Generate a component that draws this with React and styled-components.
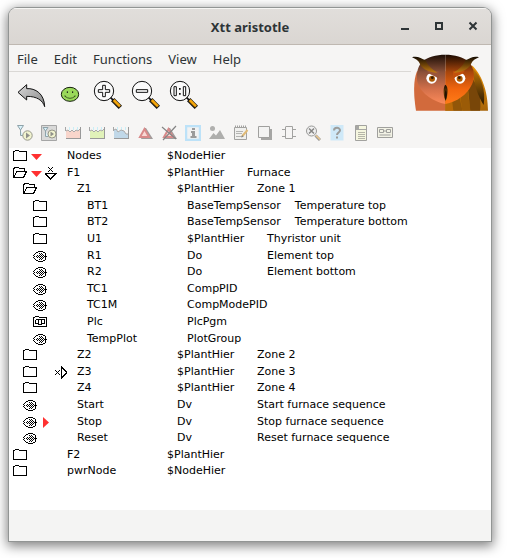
import React from "react";
import styled, { createGlobalStyle } from "styled-components";

const GlobalStyle = createGlobalStyle`
  *, *::before, *::after { box-sizing: border-box; }
  body { margin: 0; background: #fff; }
`;

const Desktop = styled.div`
  display: flex;
  min-height: 100vh;
  padding: 8px 16px 17px 9px;
`;

const Window = styled.main`
  flex: 1;
  min-width: 0;
  display: flex;
  flex-direction: column;
  overflow: hidden;
  border-radius: 8px 8px 0 0;
  background: #f6f5f4;
  box-shadow: 0 0 0 1px #929594, 0 3px 12px 2px rgba(0, 0, 0, 0.5);
  font-family: "Noto Sans", sans-serif;
  font-size: 13px;
  color: #2e3436;
`;

const TitleBar = styled.header`
  display: grid;
  grid-template-columns: 1fr auto 1fr;
  align-items: center;
  height: 37px;
  border-bottom: 1px solid #bfb8b1;
  background: linear-gradient(#e1dedb, #dad6d2);
  box-shadow: inset 0 1px #f6f5f3;
`;

const Title = styled.h1`
  grid-column: 2;
  margin: 0;
  padding-top: 2px;
  font-size: 13px;
  line-height: 20px;
  font-weight: 700;
`;

const WindowButtons = styled.div`
  display: flex;
  justify-content: flex-end;
  padding-right: 1px;
`;

const PlainButton = styled.button`
  display: flex;
  align-items: center;
  justify-content: center;
  padding: 0;
  border: 0;
  background: none;
  color: inherit;
  font: inherit;
`;

const WindowButton = styled(PlainButton)`
  width: 34px;
  height: 34px;
`;

const Head = styled.div`
  display: flex;
  align-items: flex-start;
`;

const Bars = styled.div`
  flex: 1;
  min-width: 0;
`;

const MenuBar = styled.nav`
  display: flex;
  height: 27px;
  padding-top: 2px;
  border-bottom: 1px solid #dad8d5;
`;

const MenuButton = styled(PlainButton)`
  padding: 0 8px;
  line-height: 20px;
`;

const ToolBar = styled.div`
  display: flex;
  align-items: center;
  height: ${(p) => p.$height}px;
  padding-left: 4px;
`;

const ToolButton = styled(PlainButton)`
  flex: none;
  width: ${(p) => p.$width}px;
  height: 30px;
`;

const Owl = styled.svg`
  flex: none;
  width: 76px;
  height: 57px;
  margin: 9px 3px 0 1px;
`;

const Tree = styled.section`
  flex: 1;
  background: #fff;
  color: #000;
  font-family: "DejaVu Sans", sans-serif;
  font-size: 11px;
  line-height: 16px;
`;

const Rows = styled.ul`
  display: grid;
  grid-auto-rows: 1fr;
  min-height: 332px;
  margin: 0;
  padding: 0 0 0 4px;
  list-style: none;
`;

const Row = styled.li`
  display: flex;
  align-items: flex-start;
  padding-left: ${(p) => p.$level * 10}px;
  white-space: nowrap;
`;

const Marks = styled.span`
  display: grid;
  grid-template-columns: 18px 14px 22px;
  align-items: center;
  height: 16px;

  svg {
    display: block;
  }
`;

const NodeName = styled.span`
  width: 100px;
`;

const NodeClass = styled.span`
  min-width: 80px;
  padding-right: 14px;
`;

const StatusBar = styled.footer`
  height: 31px;
  background: #f4f4f3;
`;

/* ---------- large tool icons ---------- */

const Big = ({ children }) => (
  <svg width="30" height="30" viewBox="0 0 90 90" aria-hidden="true">
    {children}
  </svg>
);

const BackIcon = () => (
  <Big>
    <defs>
      <linearGradient id="back" x1="0" y1="0" x2="1" y2="1">
        <stop offset="0" stopColor="#d8d8d8" />
        <stop offset="1" stopColor="#858585" />
      </linearGradient>
    </defs>
    <path
      d="M3 37 29 14V26C55 24 82 41 83 80 77 61 60 49 29 49V60Z"
      fill="url(#back)"
      stroke="#111"
      strokeWidth="3"
    />
  </Big>
);

const SmileIcon = () => (
  <Big>
    <ellipse cx="45" cy="43" rx="26" ry="21" fill="#9ad95a" stroke="#15200c" strokeWidth="3" />
    <path d="M37 34v5M53 34v5" stroke="#111" strokeWidth="3" />
    <path d="M30 49Q45 61 60 49M28 48h4M58 48h4" fill="none" stroke="#15200c" strokeWidth="2" />
  </Big>
);

const Magnifier = ({ children }) => (
  <Big>
    <circle cx="33" cy="33" r="29" fill="#fafafa" stroke="#111" strokeWidth="3" />
    {children}
    <path d="M53 53 62 62" stroke="#111" strokeWidth="5" />
    <path d="M59 59 82 82" stroke="#111" strokeWidth="14" />
    <path d="M62 60 81 79" stroke="#f5a70c" strokeWidth="8" />
    <path d="M60 64 78 82" stroke="#b87700" strokeWidth="2" />
  </Big>
);

const ZoomInIcon = () => (
  <Magnifier>
    <path
      d="M29 16h8v13h13v8H37v13h-8V37H16v-8h13Z"
      fill="#fff"
      stroke="#111"
      strokeWidth="3"
    />
  </Magnifier>
);

const ZoomOutIcon = () => (
  <Magnifier>
    <path d="M16 29h34v8H16Z" fill="#fff" stroke="#111" strokeWidth="3" />
  </Magnifier>
);

const ZoomResetIcon = () => (
  <Magnifier>
    <path
      d="M15 20h7v27h-7ZM43 20h7v27h-7Z"
      fill="#fff"
      stroke="#111"
      strokeWidth="3"
    />
    <path d="M30 24h5v5h-5ZM30 39h5v5h-5Z" fill="#111" />
  </Magnifier>
);

/* ---------- small tool icons ---------- */

const Small = ({ children }) => (
  <svg width="16" height="16" viewBox="0 0 16 16" fill="none" aria-hidden="true">
    {children}
  </svg>
);

const Filter = ({ boxed }) => (
  <Small>
    {boxed && <path d="M.5.5h15v15H.5Z" fill="#d9d9d8" stroke="#a5a5a5" />}
    <path
      d={boxed ? "M2 2.5h5L4.5 6ZM4.5 6v5.5H7" : "M.5.5h6L3.5 5ZM3.5 5v5.5H6"}
      fill="#d9f2fa"
      stroke="#8fa3aa"
    />
    <circle
      cx={boxed ? 11 : 10.5}
      cy={boxed ? 9 : 10.5}
      r={boxed ? 4 : 4.7}
      fill="#f1f3cf"
      stroke="#96978a"
    />
    <path d={boxed ? "M9.5 6.5 13 9l-3.5 2.5Z" : "M9 7.5 13 10.500 9 13.500Z"} fill="#8f908a" />
  </Small>
);

const Trend = ({ fill, smooth }) => {
  const line = smooth
    ? "M1 5 3 4 5 7 8 5 11 6 13 9 15 9"
    : "M1 6 3 5 5 7 7 5 9 7 11 5 13 6 15 4";
  return (
    <Small>
      <path d="M4.500 2v3M8.500 2v3M12.500 2v3" stroke="#c9eef7" />
      <path d={line + "V13H1Z"} fill={fill} />
      <path d={line} stroke="#a9a9a9" />
      <path d="M.5 2v4" stroke="#a5a5a5" />
      <path d="M1 13.500h15M15.500 2v12" stroke="#999" />
    </Small>
  );
};

const AlarmIcon = ({ crossed }) => (
  <Small>
    <path d="M8 3h1l7 11H4Z" fill="#a09c9b" />
    <path d="M7.500 4 12 12H3Z" fill="#f8d9d5" stroke="#d98a8a" strokeWidth="2" />
    {crossed && <path d="M1 2 15 14M15 1 2 15" stroke="#858585" strokeWidth="1.2" />}
  </Small>
);

const InfoIcon = () => (
  <Small>
    <path d="M1 1h14v14H1Z" fill="#f2f2f2" stroke="#bde2f8" strokeWidth="2.5" />
    <path d="M7 3h3v2H7ZM6 6h4v5h1.500v2h-6v-2H7V8H6Z" fill="#9b9b9b" />
  </Small>
);

const PictureIcon = () => (
  <Small>
    <circle cx="3.500" cy="3.500" r="2.500" fill="#b0b0ae" />
    <path d="M0 14 4.500 8 7 10.500 11 5l5 9Z" fill="#aeaeac" />
  </Small>
);

const NotesIcon = () => (
  <Small>
    <path d="M1.500 2.500h12v12h-12Z" fill="#f0f0ee" stroke="#a2a2a0" />
    <path d="M2 1.500h12" stroke="#a2a2a0" strokeWidth="2" strokeDasharray="1 1" />
    <path d="M3 6.500h7M3 8.500h6M3 11.500h7" stroke="#b4b4b2" />
    <path d="M14.500 5 9 11.500" stroke="#e0ba76" strokeWidth="2" />
    <path d="M9.500 10 8 12.500l2.500-.8" fill="#878787" />
  </Small>
);

const WindowIcon = () => (
  <Small>
    <path d="M4 4h11v11H4Z" fill="#a6a6a4" />
    <path d="M1.500 1.500h11v11h-11Z" fill="#f3f3f2" stroke="#a0a09e" />
  </Small>
);

const BlockIcon = () => (
  <Small>
    <path d="M4.500 2v11.500h7V1.500h-7M1 4.500h3M12 4.500h3M12 11.500h3M1 11.500h3" stroke="#a2a2a0" />
  </Small>
);

const SearchCrossIcon = () => (
  <Small>
    <circle cx="6.500" cy="6" r="5" fill="#f1f1f1" stroke="#989896" />
    <path d="M4 3.500l5 5M9 3.500l-5 5" stroke="#858583" strokeWidth="1.5" />
    <path d="M10.500 10.500 15 15" stroke="#9b9b99" strokeWidth="3" />
    <path d="M11 10.500 15 14.500" stroke="#edc98c" strokeWidth="1.5" />
  </Small>
);

const HelpIcon = () => (
  <Small>
    <path d="M1.500 0h13v15.500h-13Z" fill="#cfe9f8" />
    <path
      d="M5 5.500C5 2 11 2 11 5.300 11 7.500 8 7.500 8 10M8 11.500v2"
      stroke="#9d9d9b"
      strokeWidth="2"
    />
  </Small>
);

const ListIcon = () => (
  <Small>
    <path d="M2.500.5h11v15h-11Z" fill="#f5f6df" stroke="#a2a29f" />
    <path d="M3 1h3v3h7v1H3Z" fill="#a7a7a4" />
    <path d="M5 7.500h7M5 9.500h7M5 11.500h7M5 13.500h7" stroke="#b5b5a8" />
  </Small>
);

const PanelIcon = () => (
  <Small>
    <path d="M.5 2.500h15v10H.5Z" fill="#f2f2e5" stroke="#a0a09d" />
    <path d="M2.500 4.500h4v3h-4ZM9.500 4.500h4v3h-4ZM6.500 6h3M2.500 10h11" stroke="#a0a09d" />
  </Small>
);

/* ---------- tree marks ---------- */

const Glyph = ({ width = 14, children }) => (
  <svg
    width={width}
    height="14"
    viewBox={`0 0 ${width} 14`}
    fill="none"
    stroke="#000"
    shapeRendering="crispEdges"
    aria-hidden="true"
  >
    {children}
  </svg>
);

const folderPath = "M.5 11.500V2.500H1.500L2.500 1.500H5.500L6.500 2.500H13.500V11.500Z";

const nodeIcons = {
  folder: (
    <Glyph>
      <path d={folderPath} />
    </Glyph>
  ),
  open: (
    <Glyph>
      <path d="M.5 11.500V2.500L2.500 1.500H5.500L6.500 2.500H11.500V5M.5 11.500 4 5.500H13.500L10.500 11.500Z" />
    </Glyph>
  ),
  program: (
    <Glyph>
      <path d={folderPath} />
      <path d="M3 4.500h9M5.500 4.500v5h3v-5M2.500 5v3M2 8.500h3M9 8.500h3M11.500 4v5" />
    </Glyph>
  ),
  object: (
    <Glyph>
      <path
        d="M5 2.500h5M3 3.500h2M10 3.500h2M2 4.500h1M6 4.500h1M8 4.500h1M12 4.500h1M1 5.500h1M7 5.500h1M9 5.500h1M12 5.500h1M0 6.500h1M4 6.500h1M6 6.500h1M8 6.500h1M10 6.500h1M12 6.500h1M1 7.500h1M3 7.500h1M5 7.500h1M7 7.500h1M9 7.500h1M11 7.500h3M0 8.500h1M4 8.500h1M6 8.500h1M8 8.500h1M10 8.500h1M12 8.500h1M1 9.500h1M7 9.500h1M9 9.500h1M12 9.500h1M2 10.500h1M6 10.500h1M8 10.500h1M12 10.500h1M3 11.500h2M10 11.500h2M5 12.500h5"
      />
    </Glyph>
  ),
};

const DownMark = () => (
  <svg width="11" height="14" viewBox="0 0 11 14" aria-hidden="true">
    <path d="M0 5h11L5.500 11Z" fill="#ff3030" />
  </svg>
);

const RightMark = () => (
  <svg width="11" height="14" viewBox="0 0 11 14" aria-hidden="true">
    <path d="M2 2v11l6-5.500Z" fill="#ff3030" />
  </svg>
);

const CrossDownMark = () => (
  <Glyph width={12}>
    <path d="M3 1l5 5M8 1l-5 5M0 7.500h11L5.500 13Z" />
  </Glyph>
);

const CrossRightMark = () => (
  <Glyph width={12}>
    <path d="M0 5l5 5M5 5l-5 5M6.500 2v11L12 7.500Z" />
  </Glyph>
);

/* ---------- data ---------- */

const menus = ["File", "Edit", "Functions", "View", "Help"];

const mainTools = [
  ["Back", <BackIcon />],
  ["Acknowledge", <SmileIcon />],
  ["Zoom in", <ZoomInIcon />],
  ["Zoom out", <ZoomOutIcon />],
  ["Zoom reset", <ZoomResetIcon />],
];

const objectTools = [
  ["Open object graph", <Filter />],
  ["Open program", <Filter boxed />],
  ["Trend", <Trend fill="#f8d5cb" />],
  ["Fast trend", <Trend fill="#e1f2b9" />],
  ["History", <Trend fill="#c1d8e8" smooth />],
  ["Alarms", <AlarmIcon />],
  ["Block alarms", <AlarmIcon crossed />],
  ["Information", <InfoIcon />],
  ["Picture", <PictureIcon />],
  ["Notes", <NotesIcon />],
  ["Window", <WindowIcon />],
  ["Block", <BlockIcon />],
  ["Cross references", <SearchCrossIcon />],
  ["Class help", <HelpIcon />],
  ["Data sheet", <ListIcon />],
  ["Simulate", <PanelIcon />],
];

const nodes = [
  { level: 0, icon: "folder", name: "Nodes", type: "$NodeHier", alarm: <DownMark /> },
  {
    level: 0,
    icon: "open",
    name: "F1",
    type: "$PlantHier",
    text: "Furnace",
    alarm: <DownMark />,
    block: <CrossDownMark />,
  },
  { level: 1, icon: "open", name: "Z1", type: "$PlantHier", text: "Zone 1" },
  { level: 2, icon: "folder", name: "BT1", type: "BaseTempSensor", text: "Temperature top" },
  { level: 2, icon: "folder", name: "BT2", type: "BaseTempSensor", text: "Temperature bottom" },
  { level: 2, icon: "folder", name: "U1", type: "$PlantHier", text: "Thyristor unit" },
  { level: 2, icon: "object", name: "R1", type: "Do", text: "Element top" },
  { level: 2, icon: "object", name: "R2", type: "Do", text: "Element bottom" },
  { level: 2, icon: "object", name: "TC1", type: "CompPID" },
  { level: 2, icon: "object", name: "TC1M", type: "CompModePID" },
  { level: 2, icon: "program", name: "Plc", type: "PlcPgm" },
  { level: 2, icon: "object", name: "TempPlot", type: "PlotGroup" },
  { level: 1, icon: "folder", name: "Z2", type: "$PlantHier", text: "Zone 2" },
  {
    level: 1,
    icon: "folder",
    name: "Z3",
    type: "$PlantHier",
    text: "Zone 3",
    block: <CrossRightMark />,
  },
  { level: 1, icon: "folder", name: "Z4", type: "$PlantHier", text: "Zone 4" },
  { level: 1, icon: "object", name: "Start", type: "Dv", text: "Start furnace sequence" },
  {
    level: 1,
    icon: "object",
    name: "Stop",
    type: "Dv",
    text: "Stop furnace sequence",
    alarm: <RightMark />,
  },
  { level: 1, icon: "object", name: "Reset", type: "Dv", text: "Reset furnace sequence" },
  { level: 0, icon: "folder", name: "F2", type: "$PlantHier" },
  { level: 0, icon: "folder", name: "pwrNode", type: "$NodeHier" },
];

const Logo = () => (
  <Owl viewBox="36 28 228 171" aria-label="Owl" role="img">
    <defs>
      <linearGradient id="faceL" x1="0" y1="0" x2="0" y2="1">
        <stop offset="0" stopColor="#1c0d05" />
        <stop offset=".35" stopColor="#8a5038" />
        <stop offset=".7" stopColor="#d3704a" />
        <stop offset="1" stopColor="#fb8a5a" />
      </linearGradient>
      <linearGradient id="faceR" x1="0" y1="0" x2="0" y2="1">
        <stop offset="0" stopColor="#1c0a00" />
        <stop offset=".35" stopColor="#a8460c" />
        <stop offset=".7" stopColor="#f2660e" />
        <stop offset="1" stopColor="#ff7b18" />
      </linearGradient>
      <linearGradient id="tuft" x1="0" y1="0" x2="0" y2="1">
        <stop offset="0" stopColor="#160d02" />
        <stop offset=".5" stopColor="#6b4007" />
        <stop offset="1" stopColor="#c47c12" />
      </linearGradient>
      <linearGradient id="wing" x1="0" y1="0" x2="0" y2="1">
        <stop offset="0" stopColor="#e89108" />
        <stop offset="1" stopColor="#a86508" />
      </linearGradient>
      <linearGradient id="feather" x1="0" y1="0" x2="0" y2="1">
        <stop offset="0" stopColor="#c07708" />
        <stop offset="1" stopColor="#281701" />
      </linearGradient>
    </defs>
    <path d="M51 80C40 105 40 150 48 198H137V80Z" fill="#d26a3c" />
    <path d="M215 62C244 86 264 140 264 198H136V150L210 100Z" fill="url(#wing)" />
    <path d="M136 165 155 163 160 198H136Z" fill="#b96a08" />
    <path d="M156 162 178 152 187 198H160Z" fill="#925608" />
    <path d="M180 150 203 135 211 198H187Z" fill="#9b5b07" />
    <path d="M204 132 219 103C236 130 245 160 240 198H211Z" fill="#784609" />
    <path d="M219 72C246 98 257 137 251 181 235 157 220 116 219 72Z" fill="url(#feather)" />
    <path
      d="M136 30C108 30 82 37 66 51 49 69 48 100 54 117 64 147 101 171 136 178Z"
      fill="url(#faceL)"
    />
    <path
      d="M136 30C164 30 190 37 206 51 224 70 226 99 216 119 202 151 169 172 136 178Z"
      fill="url(#faceR)"
    />
    <circle cx="95" cy="101" r="16" fill="#fff" />
    <circle cx="180" cy="101" r="16" fill="#fff" />
    <circle cx="96" cy="102" r="9" fill="#a95905" />
    <circle cx="179" cy="102" r="9" fill="#a95905" />
    <circle cx="97" cy="99" r="4" fill="#301800" />
    <circle cx="178" cy="99" r="4" fill="#301800" />
    <path d="M80 78 88 87 116 101V80Z" fill="#99553a" />
    <path d="M195 78 187 87 159 101V80Z" fill="#c2500c" />
    <path
      d="M36 38C52 33 64 42 77 47 82 62 96 74 112 84 88 83 67 74 60 58 55 47 47 43 36 38Z"
      fill="url(#tuft)"
    />
    <path
      d="M237 38C221 33 209 42 196 47 191 62 177 74 161 84 185 83 206 74 213 58 218 47 226 43 237 38Z"
      fill="url(#tuft)"
    />
    <path d="M136 120C146 125 144 154 137 170 129 154 129 126 136 120Z" fill="url(#tuft)" />
    <path d="M137 136C143 144 141 158 137 168 132 157 132 147 137 136Z" fill="#211002" />
  </Owl>
);

export default function App() {
  return (
    <>
      <GlobalStyle />
      <Desktop>
        <Window>
          <TitleBar>
            <Title>Xtt aristotle</Title>
            <WindowButtons>
              <WindowButton aria-label="Minimize">
                <svg width="10" height="10" aria-hidden="true">
                  <path d="M1 7h8v2H1Z" fill="#2e3436" />
                </svg>
              </WindowButton>
              <WindowButton aria-label="Maximize">
                <svg width="10" height="10" aria-hidden="true">
                  <path d="M2 2h6v6H2Z" fill="none" stroke="#2e3436" strokeWidth="2" />
                </svg>
              </WindowButton>
              <WindowButton aria-label="Close">
                <svg width="10" height="10" aria-hidden="true">
                  <path d="M1.500 1.500l7 7M8.500 1.500l-7 7" stroke="#2e3436" strokeWidth="2" />
                </svg>
              </WindowButton>
            </WindowButtons>
          </TitleBar>
          <Head>
            <Bars>
              <MenuBar>
                {menus.map((m) => (
                  <MenuButton key={m}>{m}</MenuButton>
                ))}
              </MenuBar>
              <ToolBar $height={46}>
                {mainTools.map(([label, icon]) => (
                  <ToolButton key={label} $width={38} aria-label={label}>
                    {icon}
                  </ToolButton>
                ))}
              </ToolBar>
              <ToolBar $height={30}>
                {objectTools.map(([label, icon]) => (
                  <ToolButton key={label} $width={24} aria-label={label}>
                    {icon}
                  </ToolButton>
                ))}
              </ToolBar>
            </Bars>
            <Logo />
          </Head>
          <Tree>
            <Rows role="tree">
              {nodes.map((n) => (
                <Row key={n.name} role="treeitem" aria-level={n.level + 1} $level={n.level}>
                  <Marks>
                    {nodeIcons[n.icon]}
                    <span>{n.alarm}</span>
                    <span>{n.block}</span>
                  </Marks>
                  <NodeName>{n.name}</NodeName>
                  <NodeClass>{n.type}</NodeClass>
                  <span>{n.text}</span>
                </Row>
              ))}
            </Rows>
          </Tree>
          <StatusBar />
        </Window>
      </Desktop>
    </>
  );
}
